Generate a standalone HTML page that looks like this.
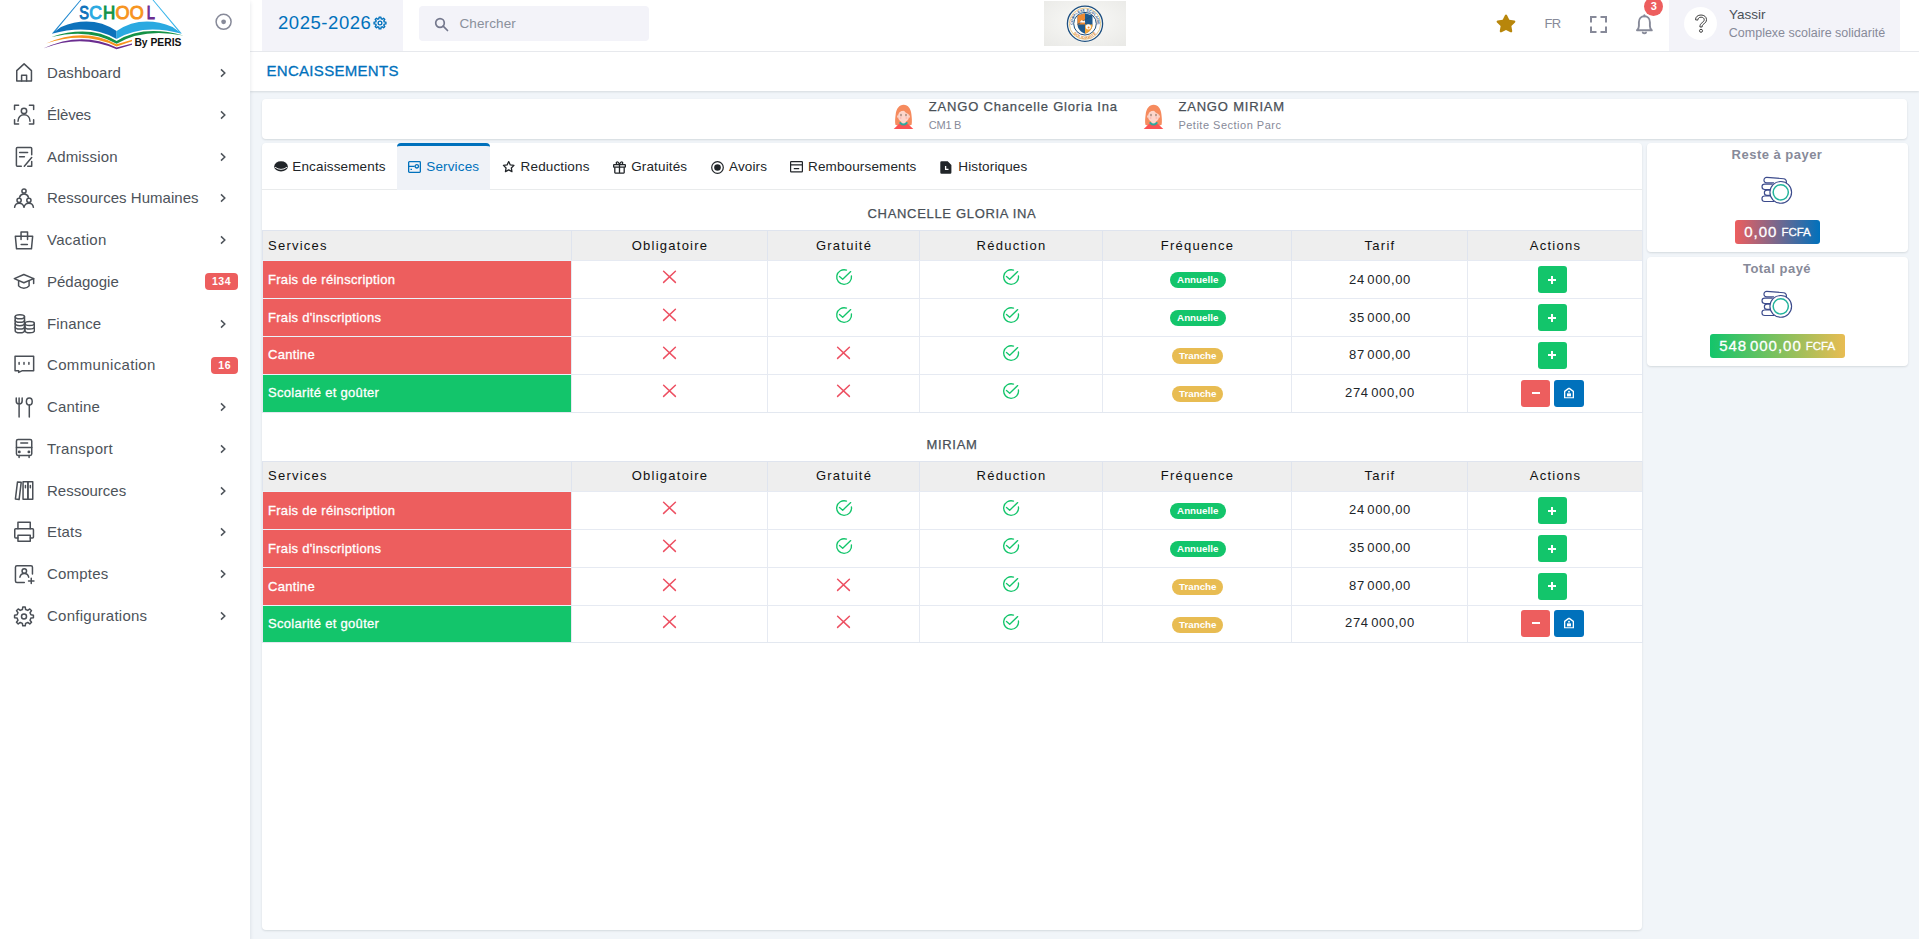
<!DOCTYPE html>
<html lang="fr">
<head>
<meta charset="utf-8">
<title>Encaissements</title>
<style>
*{box-sizing:border-box;margin:0;padding:0}
html,body{width:1919px;height:939px;overflow:hidden}
body{background:#f1f5f9;font-family:"Liberation Sans",sans-serif;color:#212529;position:relative;font-size:13px}
.abs{position:absolute}
svg{display:block}
/* sidebar */
#sidebar{position:absolute;left:0;top:0;width:250px;height:939px;background:#fff;z-index:5;box-shadow:0 2px 4px rgba(15,34,58,.12)}
.nav{position:absolute;left:0;top:52px;width:250px}
.nav .it{position:relative;height:41.77px;width:250px}
.nav .it .ic{position:absolute;left:13.100px;top:10px;width:22px;height:22px}
.nav .it .tx{position:absolute;left:47px;top:0;line-height:41.77px;font-size:15px;color:#4d535a;white-space:nowrap}
.nav .it .ch{position:absolute;left:219px;top:16px;width:8px;height:10px}
.nav .it .bd{position:absolute;right:12.400px;top:12.400px;height:17px;line-height:17px;padding:0 6.400px 0 7px;border-radius:4px;background:#ed5e5e;color:#fff;font-size:10.500px;font-weight:700;letter-spacing:.600px}
/* topbar */
#topbar{position:absolute;left:250px;top:0;width:1669px;height:52px;background:#fff;border-bottom:1px solid #e9ebef}
#year{position:absolute;left:12px;top:0;width:141px;height:51px;background:#f3f3f9}
#year .t{position:absolute;left:16px;top:0;line-height:46px;font-size:18.500px;color:#0071bc;letter-spacing:.55px;white-space:nowrap}
#search{position:absolute;left:169px;top:6px;width:230px;height:35px;background:#f3f3f9;border-radius:4px}
#search .t{position:absolute;left:40.400px;top:0;line-height:35px;font-size:13.500px;color:#8a909c;letter-spacing:.12px}
#user{position:absolute;left:1419px;top:0;width:230.600px;height:51px;background:#f3f3f9}
#user .av{position:absolute;left:15px;top:7px;width:33px;height:33px;border-radius:50%;background:#fff}
#user .n{position:absolute;left:60px;top:7.200px;font-size:13.5px;color:#495057;line-height:16px}
#user .s{position:absolute;left:59.800px;top:25.400px;font-size:12.5px;color:#878a99;line-height:16px;white-space:nowrap}
/* title */
#title{position:absolute;left:250px;top:52px;width:1669px;height:39px;background:#fff;box-shadow:0 1px 2px rgba(56,65,74,.15)}
#title .t{position:absolute;left:16.500px;top:0;line-height:37.500px;font-size:15px;font-weight:400;color:#0071bc;letter-spacing:.300px;-webkit-text-stroke:.300px #0071bc}
.card{position:absolute;background:#fff;border-radius:4px;box-shadow:0 1px 2px rgba(56,65,74,.15)}

.stu .nm{position:absolute;font-size:13px;line-height:16px;color:#495057;letter-spacing:.82px;white-space:nowrap;-webkit-text-stroke:.25px #495057}
.stu .cl{position:absolute;font-size:11px;line-height:14px;color:#878a99;white-space:nowrap}
.tab{position:absolute;top:3px;height:43px;line-height:42px;font-size:13.500px;color:#212529;white-space:nowrap;letter-spacing:.14px}
.tab svg{position:absolute}
#tabs{position:absolute;left:0;top:0;width:1380px;height:47px;border-bottom:1px solid #e9ebec}
#tabact{position:absolute;left:135.300px;top:0;width:92.700px;height:46.500px;background:#eff2f7;border-top:3px solid #0071bc;border-radius:4px 4px 0 0}
.sect{position:absolute;left:0;width:1380px;text-align:center;font-size:13px;line-height:16px;color:#495057;letter-spacing:.68px;-webkit-text-stroke:.25px #495057}

.tb{position:absolute;left:0;width:1380px;border-collapse:separate;border-spacing:0;table-layout:fixed;border-right:1px solid #e3e8f0;border-bottom:1px solid #e3e8f0}
.tb th{height:30.250px;background:#eee;border-left:1px solid #dfe4ee;border-top:1px solid #dfe4ee;font-weight:400;font-size:13px;letter-spacing:1.250px;color:#111;text-align:center;padding:0 0 0 1px;line-height:29px;vertical-align:top}
.tb th.l{text-align:left;padding-left:5px}
.tb td{height:37.850px;border-left:1px solid #e6eaf2;border-top:1px solid #e6eaf2;text-align:center;padding:0;vertical-align:top;line-height:36.500px;font-size:13px;color:#212529;position:relative}
.tb td.nm{text-align:left;padding-left:5px;color:#fff;letter-spacing:.300px;border-top-color:#eaf3f9;-webkit-text-stroke:.300px #fff}
.tb td.nm.r{background:#ed5e5e}.tb td.nm.g{background:#13c56b}
.tb td.nm span{position:relative;top:.500px}
.tb .ix{position:absolute;left:50%;margin-left:-7.500px;top:8.900px}
.tb .ic2{position:absolute;left:50%;margin-left:-8.700px;top:6.800px}
.bg{display:inline-block;height:16px;line-height:16px;border-radius:8px;padding:0 7.300px;color:#fff;font-size:9.800px;font-weight:700;vertical-align:top;margin-top:10.800px;margin-left:1.500px}
.bg.ga{background:#13c56b}.bg.ye{background:#e8bc52;padding:0 6.500px}
.tb td.tf{letter-spacing:.650px;word-spacing:-1.800px;line-height:34px;padding-top:1.500px;padding-left:1px}
.btn{display:inline-block;width:29px;height:27px;border-radius:3px;vertical-align:top;margin-top:5px;position:relative}
.btn svg{position:absolute;left:50%;top:50%;transform:translate(-50%,-50%)}
.btn.g{background:#13c56b;margin-left:-6px}.btn.r{background:#ed5e5e;margin-left:-5px}.btn.b{background:#0071bc;margin-left:4px;width:30px}

.rc .h{position:absolute;left:0;width:260px;top:4px;text-align:center;font-size:13px;font-weight:700;line-height:16px;color:#878a99;letter-spacing:.48px}
.rc .coin{position:absolute;left:112px;top:32px}
.rc .amt{position:absolute;top:77px;height:24px;border-radius:3px;color:#fff;white-space:nowrap;line-height:24px;font-size:15px;letter-spacing:1px;word-spacing:-2.500px;-webkit-text-stroke:.300px #fff}
.rc .amt small{font-size:11.500px;letter-spacing:0;margin-left:4px;position:relative;top:-.600px}
.t2 th{line-height:27.600px}
.t2 td.tf{padding-top:.700px}
.t2 tbody tr:last-child td{height:37.400px;line-height:36.200px}
.t2 tbody tr:last-child td.tf{line-height:34px}
.t2 tbody tr:last-child .btn{margin-top:4px}
.t2 tbody tr:nth-child(n+3) .ix{top:9.600px}.t2 tbody tr:nth-child(n+3) .ic2{top:7.500px}
.t2 td.nm span{top:.700px}
.t2 .ix{top:8.600px}.t2 .ic2{top:6.500px}
</style>
</head>
<body>
<div id="sidebar">
<svg id="logo" class="abs" style="left:0;top:0" width="250" height="52" viewBox="0 0 250 52">
<path d="M80.2 0L52 33.600 54.400 32.400 81.300 0z" fill="#1b86cf"/>
<path d="M153.600 0L181.800 33.600 179.400 32.400 152.500 0z" fill="#35b4ea"/>
<path d="M51.800 33.800L61 26.900Q92 14.500 116.600 31L116.600 39Q90 23 51.800 33.800z" fill="#0d72bb"/>
<path d="M181.800 33.800L172.600 26.900Q141.200 14.500 116.600 31L116.600 39Q143.200 23 181.800 33.800z" fill="#2aa9e1"/>
<path d="M51.200 37Q90 24.300 116.600 41Q143.500 24.300 183.300 35.500Q143.500 27.800 116.600 43.800Q90 27.800 51.200 37z" fill="#149247"/>
<path d="M46 43.500Q84 26.800 116.600 44.200L132 39.800L132 41.300L116.600 46.400Q84 30.800 46 43.500z" fill="#f7941e"/>
<path d="M43.200 48.600Q81 30.400 116.600 47.400L132 43.500L132 44.700L116.600 49.200Q81 33.600 43.200 48.600z" fill="#6b2d90"/>
<g font-family="Liberation Sans, sans-serif" font-size="19.200" text-anchor="middle" stroke-width="1">
<text transform="translate(84.200 18.700) scale(.760 1)" fill="#0d72bb" stroke="#0d72bb">S</text>
<text transform="translate(95.650 18.700) scale(.920 1)" fill="#2aa9e1" stroke="#2aa9e1">C</text>
<text transform="translate(109.150 18.700) scale(.880 1)" fill="#149247" stroke="#149247">H</text>
<text transform="translate(122.600 18.700) scale(.940 1)" fill="#f7941e" stroke="#f7941e">O</text>
<text transform="translate(136.700 18.700) scale(.940 1)" fill="#f7941e" stroke="#f7941e">O</text>
<text transform="translate(150.700 18.700) scale(.760 1)" fill="#6b2d90" stroke="#6b2d90">L</text>
</g>
<text x="134.400" y="46.400" font-family="Liberation Sans, sans-serif" font-weight="700" font-size="11" fill="#111" textLength="47" lengthAdjust="spacingAndGlyphs">By PERIS</text>
<circle cx="223.600" cy="21.800" r="7.500" fill="none" stroke="#878a99" stroke-width="1.500"/><circle cx="223.600" cy="21.800" r="2.400" fill="#878a99"/>
</svg>
  <div class="nav" id="nav"><!--NAV-->
<div class="it"><svg class="ic" viewBox="0 0 22 22" fill="none" stroke="#4a4f56" stroke-width="1.5" stroke-linecap="round" stroke-linejoin="round"><path d="M3.750 19V8.600L11.100 1.900l7.350 6.700V19z"/><path d="M8.600 19v-5.800h5V19"/></svg><span class="tx" style="letter-spacing:0.07px">Dashboard</span><svg class="ch" viewBox="0 0 8 10"><path d="M2 1.400L5.800 5 2 8.600" fill="none" stroke="#4d535a" stroke-width="1.5"/></svg></div>
<div class="it"><svg class="ic" viewBox="0 0 22 22" fill="none" stroke="#4a4f56" stroke-width="1.5" stroke-linecap="round" stroke-linejoin="round"><path d="M1.55 5.4V1.15H5.6M16.4 1.15h4.25V5.4M1.55 15.8v4.25H5.6M16.4 20.05h4.25V15.8"/><circle cx="11" cy="6.900" r="2.700"/><path d="M5 17.300c0-4.200 2.600-6.600 6-6.600s6 2.400 6 6.600"/></svg><span class="tx" style="letter-spacing:-0.18px">Élèves</span><svg class="ch" viewBox="0 0 8 10"><path d="M2 1.400L5.800 5 2 8.600" fill="none" stroke="#4d535a" stroke-width="1.5"/></svg></div>
<div class="it"><svg class="ic" viewBox="0 0 22 22" fill="none" stroke="#4a4f56" stroke-width="1.5" stroke-linecap="round" stroke-linejoin="round"><path d="M8.3 20.3H4.4a1 1 0 0 1-1-1V2.4a1 1 0 0 1 1-1h13.3a1 1 0 0 1 1 1v6.3"/><path d="M6.6 6.6h8M6.6 10.8h4.8"/><path d="M18.7 11.6l-7.4 8.7M18.7 15.6v4.7h-4"/></svg><span class="tx" style="letter-spacing:0.17px">Admission</span><svg class="ch" viewBox="0 0 8 10"><path d="M2 1.400L5.800 5 2 8.600" fill="none" stroke="#4d535a" stroke-width="1.5"/></svg></div>
<div class="it"><svg class="ic" viewBox="0 0 22 22" fill="none" stroke="#4a4f56" stroke-width="1.5" stroke-linecap="round" stroke-linejoin="round"><circle cx="11" cy="4" r="2.1"/><circle cx="6.1" cy="13.3" r="2.1"/><circle cx="15.9" cy="13.3" r="2.1"/><path d="M6.6 10.2C7.2 8.1 8.9 7 11 7s3.8 1.1 4.4 3.2"/><path d="M1.6 20.3c.3-2.6 2-4.1 4.5-4.1s4.4 1.600 4.900 4.1c.5-2.5 2.400-4.1 4.900-4.1s4.200 1.500 4.500 4.100"/></svg><span class="tx" style="letter-spacing:0.04px">Ressources Humaines</span><svg class="ch" viewBox="0 0 8 10"><path d="M2 1.400L5.800 5 2 8.600" fill="none" stroke="#4d535a" stroke-width="1.5"/></svg></div>
<div class="it"><svg class="ic" viewBox="0 0 22 22" fill="none" stroke="#4a4f56" stroke-width="1.5" stroke-linecap="round" stroke-linejoin="round"><path d="M2.35 7.2h17.3l-1.2 12.65H3.55z"/><path d="M8.05 10.600V3.050h6.5v7.550"/><path d="M8.2 15.5h6.2"/></svg><span class="tx" style="letter-spacing:0.28px">Vacation</span><svg class="ch" viewBox="0 0 8 10"><path d="M2 1.400L5.800 5 2 8.600" fill="none" stroke="#4d535a" stroke-width="1.5"/></svg></div>
<div class="it"><svg class="ic" viewBox="0 0 22 22" fill="none" stroke="#4a4f56" stroke-width="1.5" stroke-linecap="round" stroke-linejoin="round"><path d="M1.3 7.6L10.850 3.500 20.650 7.600 10.850 11.700z"/><path d="M5.6 9.800v5.100c1.300 1.600 3.100 2.400 5.250 2.400s3.950-.800 5.250-2.400V9.800"/><path d="M20.650 7.600v5.000"/></svg><span class="tx">Pédagogie</span><span class="bd">134</span></div>
<div class="it"><svg class="ic" viewBox="0 0 22 22" fill="none" stroke="#4a4f56" stroke-width="1.5" stroke-linecap="round" stroke-linejoin="round"><ellipse cx="6.850" cy="3.800" rx="4.650" ry="2.050"/><path d="M2.200 3.800V17.700c0 1.130 2.080 2.050 4.650 2.050s4.650-.920 4.650-2.050V3.800"/><path d="M2.200 7.200c0 1.130 2.080 2.050 4.650 2.050s4.650-.920 4.650-2.050M2.200 10.600c0 1.130 2.080 2.050 4.650 2.050s4.650-.920 4.650-2.050M2.200 13.900c0 1.130 2.080 2.050 4.650 2.050s4.650-.920 4.650-2.050"/><ellipse cx="16.700" cy="10.500" rx="4.700" ry="2.050"/><path d="M12 10.500V17.700c0 1.130 2.100 2.050 4.700 2.050s4.700-.920 4.700-2.050V10.500"/><path d="M12 13.900c0 1.130 2.100 2.050 4.700 2.050s4.700-.920 4.700-2.050"/></svg><span class="tx" style="letter-spacing:0.13px">Finance</span><svg class="ch" viewBox="0 0 8 10"><path d="M2 1.400L5.800 5 2 8.600" fill="none" stroke="#4d535a" stroke-width="1.5"/></svg></div>
<div class="it"><svg class="ic" viewBox="0 0 22 22" fill="none" stroke="#4a4f56" stroke-width="1.5" stroke-linecap="round" stroke-linejoin="round"><path d="M2.050 2.350h18.600v14.300H9.400l-3.700 1.800v-1.800H2.050z"/><path d="M6.1 8.600v1.600M11 8.600v1.600M15.900 8.600v1.600"/></svg><span class="tx" style="letter-spacing:0.35px">Communication</span><span class="bd">16</span></div>
<div class="it"><svg class="ic" viewBox="0 0 22 22" fill="none" stroke="#4a4f56" stroke-width="1.5" stroke-linecap="round" stroke-linejoin="round"><path d="M3.250 1.950v3.100c0 1.900 1.200 3.000 2.850 3.000s3.050-1.100 3.050-3.000V1.950M6.100 1.950v19.000"/><ellipse cx="16.300" cy="5.450" rx="2.900" ry="3.550"/><path d="M16.300 9.000v11.950"/></svg><span class="tx" style="letter-spacing:0.19px">Cantine</span><svg class="ch" viewBox="0 0 8 10"><path d="M2 1.400L5.800 5 2 8.600" fill="none" stroke="#4d535a" stroke-width="1.5"/></svg></div>
<div class="it"><svg class="ic" viewBox="0 0 22 22" fill="none" stroke="#4a4f56" stroke-width="1.5" stroke-linecap="round" stroke-linejoin="round"><rect x="3.450" y="1.450" width="15.300" height="16.000" rx="1.600"/><path d="M3.450 9.600h15.300M7.800 5.100h6.800M6.100 17.450v2.000M16.100 17.450v2.000"/><circle cx="6.300" cy="13.900" r=".7"/><circle cx="15.900" cy="13.900" r=".7"/></svg><span class="tx" style="letter-spacing:0.25px">Transport</span><svg class="ch" viewBox="0 0 8 10"><path d="M2 1.400L5.800 5 2 8.600" fill="none" stroke="#4d535a" stroke-width="1.5"/></svg></div>
<div class="it"><svg class="ic" viewBox="0 0 22 22" fill="none" stroke="#4a4f56" stroke-width="1.5" stroke-linecap="round" stroke-linejoin="round"><path d="M4.500 1.900l3.700.400-2.100 17.300-3.700-.500z"/><rect x="10.050" y="1.850" width="4.850" height="17.500"/><rect x="14.900" y="1.850" width="4.850" height="17.500"/><path d="M12.450 5.600v2.200M17.350 5.600v2.200"/></svg><span class="tx">Ressources</span><svg class="ch" viewBox="0 0 8 10"><path d="M2 1.400L5.800 5 2 8.600" fill="none" stroke="#4d535a" stroke-width="1.5"/></svg></div>
<div class="it"><svg class="ic" viewBox="0 0 22 22" fill="none" stroke="#4a4f56" stroke-width="1.5" stroke-linecap="round" stroke-linejoin="round"><path d="M4.950 7.800V1.250h12.300V7.800"/><path d="M4.950 17.000H2.750a1 1 0 0 1-1-1V8.800a1 1 0 0 1 1-1h16.700a1 1 0 0 1 1 1v7.200a1 1 0 0 1-1 1h-2.200"/><rect x="4.950" y="14.200" width="12.300" height="6.150"/></svg><span class="tx" style="letter-spacing:0.18px">Etats</span><svg class="ch" viewBox="0 0 8 10"><path d="M2 1.400L5.800 5 2 8.600" fill="none" stroke="#4d535a" stroke-width="1.5"/></svg></div>
<div class="it"><svg class="ic" viewBox="0 0 22 22" fill="none" stroke="#4a4f56" stroke-width="1.5" stroke-linecap="round" stroke-linejoin="round"><path d="M11.300 19.550H3.950a1.500 1.500 0 0 1-1.500-1.500V4.150a1.500 1.500 0 0 1 1.500-1.500h14.000a1.500 1.500 0 0 1 1.500 1.500v6.900"/><circle cx="11.300" cy="8.000" r="2.250"/><path d="M6.900 14.200c.500-2.400 2.100-3.700 4.400-3.700s3.900 1.300 4.400 3.700"/><path d="M18.250 15.200v5.400M15.550 17.900h5.400"/></svg><span class="tx" style="letter-spacing:0.19px">Comptes</span><svg class="ch" viewBox="0 0 8 10"><path d="M2 1.400L5.800 5 2 8.600" fill="none" stroke="#4d535a" stroke-width="1.5"/></svg></div>
<div class="it"><svg class="ic" viewBox="0 0 22 22" fill="none" stroke="#4a4f56" stroke-width="1.5" stroke-linecap="round" stroke-linejoin="round"><path d="M9.38 4.54L9.77 2.03L12.23 2.03L12.62 4.54L14.74 5.42L16.79 3.92L18.53 5.66L17.03 7.71L17.91 9.83L20.42 10.22L20.42 12.68L17.91 13.07L17.03 15.19L18.53 17.24L16.79 18.98L14.74 17.48L12.62 18.36L12.23 20.87L9.77 20.87L9.38 18.36L7.26 17.48L5.21 18.98L3.47 17.24L4.97 15.19L4.09 13.07L1.58 12.68L1.58 10.22L4.09 9.83L4.97 7.71L3.47 5.66L5.21 3.92L7.26 5.42z"/><circle cx="11" cy="11.450" r="2.500"/></svg><span class="tx" style="letter-spacing:0.26px">Configurations</span><svg class="ch" viewBox="0 0 8 10"><path d="M2 1.400L5.800 5 2 8.600" fill="none" stroke="#4d535a" stroke-width="1.5"/></svg></div>
<!--/NAV--></div>
</div>
<div id="topbar">
  <div id="year"><div class="t">2025-2026</div>
<svg class="abs" style="left:110.700px;top:16.200px" width="14" height="14" viewBox="0 0 15 15"><path d="M6.29 2.96L6.54 1.17L8.46 1.17L8.71 2.96L9.86 3.43L11.30 2.35L12.65 3.70L11.57 5.14L12.04 6.29L13.83 6.54L13.83 8.46L12.04 8.71L11.57 9.86L12.65 11.30L11.30 12.65L9.86 11.57L8.71 12.04L8.46 13.83L6.54 13.83L6.29 12.04L5.14 11.57L3.70 12.65L2.35 11.30L3.43 9.86L2.96 8.71L1.17 8.46L1.17 6.54L2.96 6.29L3.43 5.14L2.35 3.70L3.70 2.35L5.14 3.43z" fill="none" stroke="#0071bc" stroke-width="1.500" stroke-linejoin="round"/><circle cx="7.500" cy="7.500" r="2" fill="none" stroke="#0071bc" stroke-width="1.400"/></svg></div>
  <div id="search"><svg class="abs" style="left:15px;top:11px" width="15" height="15" viewBox="0 0 15 15" fill="none" stroke="#74788d" stroke-width="1.700"><circle cx="6" cy="6" r="4.300"/><path d="M9.200 9.200l4.300 4.300" stroke-linecap="round"/></svg><div class="t">Chercher</div></div>
  <svg class="abs" id="crest" style="left:794px;top:1px" width="82" height="45" viewBox="0 0 82 45">
  <defs><radialGradient id="cg" cx=".5" cy=".45" r=".75"><stop offset="0" stop-color="#fafaf8"/><stop offset="1" stop-color="#e9e9e6"/></radialGradient>
  <path id="arcT" d="M28.700 22.700a12.300 12.300 0 0 1 24.600 0"/><path id="arcB" d="M25.800 22.700a15.200 15.200 0 0 0 30.400 0"/></defs>
  <rect width="82" height="45" fill="url(#cg)"/>
  <circle cx="41" cy="22.700" r="17.600" fill="#fdfdfb" stroke="#1d4f80" stroke-width="1.300"/>
  <circle cx="41" cy="22.700" r="15.700" fill="none" stroke="#d9a441" stroke-width=".6"/>
  <circle cx="41" cy="22.700" r="11.300" fill="#fdfdfb" stroke="#1d4f80" stroke-width="1"/>
  <text font-family="Liberation Sans, sans-serif" font-size="3.500" font-weight="700" fill="#1d4f80" letter-spacing=".1"><textPath href="#arcT" startOffset="50%" text-anchor="middle">COMPLEXE SCOLAIRE</textPath></text>
  <text font-family="Liberation Sans, sans-serif" font-size="4" font-weight="700" fill="#e08a2c" letter-spacing=".2"><textPath href="#arcB" startOffset="50%" text-anchor="middle">SOLIDARITÉ</textPath></text>
  <path d="M33.500 14.500L41 12.200l7.500 2.300v8.500c0 5-3.200 8-7.500 9.800-4.300-1.800-7.500-4.800-7.500-9.800z" fill="#1f5a8e"/>
  <path d="M33.500 14.500L41 12.200v11.200h-7.500z" fill="#ee8a32"/>
  <path d="M41 23.400h7.500c0 4.600-3 7.600-7.500 9.400z" fill="#f2a63a"/>
  <path d="M33.500 23.400L48.500 14.500" stroke="#1d4f80" stroke-width=".8"/>
  <circle cx="44.300" cy="25.800" r="2.600" fill="#fff"/><circle cx="44.600" cy="26.400" r="1" fill="#ee8a32"/>
  <path d="M35.500 21.500l2.200-2.600 1.500 1.400 1.200-1 .9 2.200z" fill="#fff"/>
  </svg>
  <svg class="abs" style="left:1245px;top:12.300px" width="22" height="22" viewBox="0 0 24 24"><path d="M12 2.700c.5 0 .95.280 1.170.730l2.450 4.960 5.480.800c1.070.155 1.500 1.470.720 2.220l-3.960 3.860.930 5.450c.180 1.060-.930 1.870-1.890 1.370L12 19.520l-4.900 2.580c-.960.500-2.070-.310-1.890-1.370l.930-5.450-3.960-3.860c-.780-.750-.350-2.065.720-2.220l5.480-.800 2.450-4.960c.220-.450.670-.730 1.170-.730z" fill="#b8860b"/></svg>
  <div class="abs" style="left:1294.500px;top:16px;font-size:13px;line-height:16px;color:#878a99;letter-spacing:-.8px">FR</div>
  <svg class="abs" style="left:1339px;top:15px" width="19" height="19" viewBox="0 0 19 19" fill="none" stroke="#878a99" stroke-width="2"><path d="M2 7.500V2h5.500M11.500 2H17v5.500M17 11.500V17h-5.500M7.500 17H2v-5.500"/></svg>
  <svg class="abs" style="left:1384px;top:13px" width="21" height="22" viewBox="0 0 21 22" fill="none" stroke="#878a99" stroke-width="1.900" stroke-linejoin="round" stroke-linecap="round"><path d="M3 17.300c1.300-1.100 1.900-2.400 1.900-4.200V9.300c0-3.600 2.300-6 5.500-6s5.500 2.400 5.500 6v3.800c0 1.800.600 3.100 1.900 4.200z"/><path d="M8.800 19.600c.400.500 1 .700 1.600.700s1.200-.200 1.600-.700"/><path d="M10.400 3.300V2.300"/></svg>
  <div class="abs" style="left:1394.250px;top:-3px;width:19px;height:19px;border-radius:50%;background:#ed5e5e;color:#fff;font-size:11px;font-weight:700;line-height:19px;text-align:center">3</div>
  <div id="user"><div class="av"><svg class="abs" style="left:9.500px;top:6.500px" width="14" height="20" viewBox="0 0 14 20" fill="none" stroke="#2b2b2b" stroke-width=".9" stroke-linejoin="round"><path d="M1.500 5.800C1.500 2.800 3.800 1 7 1s5.500 1.900 5.500 4.600c0 2.200-1.300 3.300-2.700 4.300-1.200.900-1.700 1.500-1.700 3.100H5.900c0-2.300.800-3.300 2.300-4.400 1.200-.900 2-1.600 2-2.900 0-1.500-1.200-2.500-3.100-2.500-2 0-3.200 1.100-3.300 2.900z"/><circle cx="7" cy="16.800" r="1.500"/></svg></div><div class="n">Yassir</div><div class="s">Complexe scolaire solidarité</div></div>
</div>
<div id="title"><div class="t">ENCAISSEMENTS</div></div>
<div class="card" id="students" style="left:262px;top:99px;width:1645px;height:40px"><div class="stu"><svg class="abs" style="left:630px;top:4px" width="24" height="28" viewBox="0 0 24 28"><path d="M3.400 21.800c-.600-3.500-.200-7 .300-10.500C4.300 5.800 7.200 1.800 11.600 1.800c4.500 0 7.300 4 7.800 9.500.400 3.500.800 7 .200 10.500-1.500.800-3.600 1.200-5 .800H8.400c-1.500.400-3.500 0-5-.800z" fill="#f68b5e"/><path d="M1.700 25.900L7 21h9l5.300 4.900z" fill="#fb5252"/><path d="M9.200 17.500h4.600v4.200H9.200z" fill="#fbd3c8"/><ellipse cx="11.500" cy="13.300" rx="5.500" ry="6" fill="#fdd5cb"/><ellipse cx="5.900" cy="13.600" rx=".8" ry="1.300" fill="#fbd0c4"/><ellipse cx="17.100" cy="13.600" rx=".8" ry="1.300" fill="#fbd0c4"/><path d="M6 10.800c1.500-2.500 4-3.300 6.300-2.800 1.300 1.800 3 2.800 4.800 3.200.300-4-1.600-6.900-5.500-6.900S5.500 7 6 10.800z" fill="#f68b5e"/><path d="M8.300 20Q11.500 23.200 14.700 20" fill="none" stroke="#2fa89c" stroke-width="2" stroke-linecap="round"/><ellipse cx="9" cy="12.100" rx=".7" ry="1.300" fill="#8f7a6e"/><ellipse cx="14" cy="12.100" rx=".7" ry="1.300" fill="#8f7a6e"/><circle cx="8.600" cy="15" r="1" fill="#fbbcb8"/><circle cx="14.400" cy="15" r="1" fill="#fbbcb8"/></svg><div class="nm" style="left:666.800px;top:-.500px">ZANGO Chancelle Gloria Ina</div><div class="cl" style="left:666.800px;top:19px;letter-spacing:-.25px">CM1 B</div><svg class="abs" style="left:879.7px;top:4px" width="24" height="28" viewBox="0 0 24 28"><path d="M3.400 21.800c-.600-3.500-.200-7 .300-10.500C4.300 5.800 7.200 1.800 11.600 1.800c4.500 0 7.300 4 7.800 9.500.400 3.500.800 7 .200 10.500-1.500.800-3.600 1.200-5 .800H8.400c-1.500.400-3.500 0-5-.800z" fill="#f68b5e"/><path d="M1.700 25.900L7 21h9l5.300 4.900z" fill="#fb5252"/><path d="M9.200 17.500h4.600v4.200H9.200z" fill="#fbd3c8"/><ellipse cx="11.500" cy="13.300" rx="5.500" ry="6" fill="#fdd5cb"/><ellipse cx="5.900" cy="13.600" rx=".8" ry="1.300" fill="#fbd0c4"/><ellipse cx="17.100" cy="13.600" rx=".8" ry="1.300" fill="#fbd0c4"/><path d="M6 10.800c1.500-2.500 4-3.300 6.300-2.800 1.300 1.800 3 2.800 4.800 3.200.300-4-1.600-6.900-5.500-6.900S5.500 7 6 10.800z" fill="#f68b5e"/><path d="M8.300 20Q11.500 23.200 14.700 20" fill="none" stroke="#2fa89c" stroke-width="2" stroke-linecap="round"/><ellipse cx="9" cy="12.100" rx=".7" ry="1.300" fill="#8f7a6e"/><ellipse cx="14" cy="12.100" rx=".7" ry="1.300" fill="#8f7a6e"/><circle cx="8.600" cy="15" r="1" fill="#fbbcb8"/><circle cx="14.400" cy="15" r="1" fill="#fbbcb8"/></svg><div class="nm" style="left:916.400px;top:-.500px">ZANGO MIRIAM</div><div class="cl" style="left:916.400px;top:19px;letter-spacing:.5px">Petite Section Parc</div></div></div>
<div class="card" id="main" style="left:262px;top:143px;width:1380px;height:787px"><div id="tabs"><div id="tabact"></div><div class="tab" style="left:0;color:#212529"><span class="abs" style="left:30.3px;top:0">Encaissements</span><svg style="left:11.500px;top:15.200px" width="14" height="11" viewBox="0 0 14 11"><ellipse cx="7" cy="5.400" rx="6.800" ry="5.100" fill="#212529"/><path d="M1 6.200Q7 10.600 13 6.200" fill="none" stroke="#fff" stroke-width=".9"/></svg></div><div class="tab" style="left:0;color:#0071bc"><span class="abs" style="left:164.300px;top:0">Services</span><svg style="left:146.4px;top:14.500px" width="13" height="12" viewBox="0 0 13 12" fill="none" stroke="#0071bc" stroke-width="1.300"><rect x=".650" y=".650" width="11.700" height="10.700" rx=".8"/><path d="M.650 5.300h6M2.500 8.300h1.500" /><circle cx="8.800" cy="5.300" r="1.700"/></svg></div><div class="tab" style="left:0;color:#212529"><span class="abs" style="left:258.6px;top:0">Reductions</span><svg style="left:239.6px;top:13.500px" width="13.400" height="13.400" viewBox="0 0 24 24" fill="none" stroke="#212529" stroke-width="2.300" stroke-linejoin="round"><path d="M12 2.800l2.900 6 6.500.900-4.700 4.600 1.100 6.500L12 17.700l-5.800 3.100 1.100-6.500L2.600 9.700l6.500-.900z"/></svg></div><div class="tab" style="left:0;color:#212529"><span class="abs" style="left:369.2px;top:0">Gratuités</span><svg style="left:351.0px;top:14.500px" width="13" height="13" viewBox="0 0 13 13" fill="none" stroke="#212529" stroke-width="1.300"><rect x=".650" y="3.600" width="11.700" height="2.600" rx=".4"/><path d="M1.800 6.200v5.400a.5.500 0 0 0 .5.500h8.400a.5.500 0 0 0 .5-.5V6.200M6.500 3.600v8.500"/><path d="M6.500 3.400C5.800 1.600 4.800.700 3.900 1s-.900 1.700.300 2.400M6.500 3.400C7.200 1.600 8.200.700 9.100 1s.900 1.700-.300 2.400"/></svg></div><div class="tab" style="left:0;color:#212529"><span class="abs" style="left:467.0px;top:0">Avoirs</span><svg style="left:448.6px;top:14.500px" width="13" height="13" viewBox="0 0 13 13"><circle cx="6.500" cy="6.500" r="5.800" fill="none" stroke="#212529" stroke-width="1.200"/><circle cx="6.500" cy="6.500" r="3.300" fill="#212529"/></svg></div><div class="tab" style="left:0;color:#212529"><span class="abs" style="left:546.0px;top:0">Remboursements</span><svg style="left:527.7px;top:15px" width="13" height="12" viewBox="0 0 13 12" fill="none" stroke="#212529" stroke-width="1.200"><rect x=".600" y=".600" width="11.800" height="10.300" rx=".6"/><path d="M.600 3.800h11.800M3.800 7.700h5.400"/></svg></div><div class="tab" style="left:0;color:#212529"><span class="abs" style="left:696.3px;top:0">Historiques</span><svg style="left:678.4px;top:14.800px" width="12" height="13" viewBox="0 0 12 13"><path d="M1.500.300h6.200l3.700 3.600v7.600a1.200 1.200 0 0 1-1.200 1.200H1.500A1.200 1.200 0 0 1 .300 11.500V1.500A1.200 1.200 0 0 1 1.500.300z" fill="#212529"/><path d="M5.600 5v3.400h2.900" fill="none" stroke="#fff" stroke-width="1.300"/></svg></div></div><div class="sect" style="top:62.500px">CHANCELLE GLORIA INA</div><!--T1-->
<table class="tb" style="top:87px"><colgroup><col style="width:309px"><col style="width:196px"><col style="width:152px"><col style="width:183px"><col style="width:189px"><col style="width:176px"><col style="width:175px"></colgroup><thead><tr><th class="l">Services</th><th>Obligatoire</th><th>Gratuité</th><th>Réduction</th><th>Fréquence</th><th>Tarif</th><th>Actions</th></tr></thead><tbody><tr><td class="nm r"><span>Frais de réinscription</span></td><td><svg class="ix" width="15" height="14" viewBox="0 0 15 14"><path d="M1.600 1.200l11.800 11.200M13.400 1.200L1.600 12.400" fill="none" stroke="#ed5062" stroke-width="1.500" stroke-linecap="round"/></svg></td><td><svg class="ic2" width="18" height="18" viewBox="0 0 18 18" fill="none" stroke="#13c56b" stroke-width="1.350" stroke-linecap="round" stroke-linejoin="round"><path d="M16.430 7.980A7.400 7.300 0 1 1 11.500 2.140"/><path d="M4.500 8.500l3.200 2.700 8-7.600"/></svg></td><td><svg class="ic2" width="18" height="18" viewBox="0 0 18 18" fill="none" stroke="#13c56b" stroke-width="1.350" stroke-linecap="round" stroke-linejoin="round"><path d="M16.430 7.980A7.400 7.300 0 1 1 11.500 2.140"/><path d="M4.500 8.500l3.200 2.700 8-7.600"/></svg></td><td><span class="bg ga">Annuelle</span></td><td class="tf">24 000,00</td><td class="ac"><span class="btn g"><svg width="8" height="8" viewBox="0 0 8 8"><path d="M4 0v8M0 4h8" stroke="#fff" stroke-width="2"/></svg></span></td></tr><tr><td class="nm r"><span>Frais d'inscriptions</span></td><td><svg class="ix" width="15" height="14" viewBox="0 0 15 14"><path d="M1.600 1.200l11.800 11.200M13.400 1.200L1.600 12.400" fill="none" stroke="#ed5062" stroke-width="1.500" stroke-linecap="round"/></svg></td><td><svg class="ic2" width="18" height="18" viewBox="0 0 18 18" fill="none" stroke="#13c56b" stroke-width="1.350" stroke-linecap="round" stroke-linejoin="round"><path d="M16.430 7.980A7.400 7.300 0 1 1 11.500 2.140"/><path d="M4.500 8.500l3.200 2.700 8-7.600"/></svg></td><td><svg class="ic2" width="18" height="18" viewBox="0 0 18 18" fill="none" stroke="#13c56b" stroke-width="1.350" stroke-linecap="round" stroke-linejoin="round"><path d="M16.430 7.980A7.400 7.300 0 1 1 11.500 2.140"/><path d="M4.500 8.500l3.200 2.700 8-7.600"/></svg></td><td><span class="bg ga">Annuelle</span></td><td class="tf">35 000,00</td><td class="ac"><span class="btn g"><svg width="8" height="8" viewBox="0 0 8 8"><path d="M4 0v8M0 4h8" stroke="#fff" stroke-width="2"/></svg></span></td></tr><tr><td class="nm r"><span>Cantine</span></td><td><svg class="ix" width="15" height="14" viewBox="0 0 15 14"><path d="M1.600 1.200l11.800 11.200M13.400 1.200L1.600 12.400" fill="none" stroke="#ed5062" stroke-width="1.500" stroke-linecap="round"/></svg></td><td><svg class="ix" width="15" height="14" viewBox="0 0 15 14"><path d="M1.600 1.200l11.800 11.200M13.400 1.200L1.600 12.400" fill="none" stroke="#ed5062" stroke-width="1.500" stroke-linecap="round"/></svg></td><td><svg class="ic2" width="18" height="18" viewBox="0 0 18 18" fill="none" stroke="#13c56b" stroke-width="1.350" stroke-linecap="round" stroke-linejoin="round"><path d="M16.430 7.980A7.400 7.300 0 1 1 11.500 2.140"/><path d="M4.500 8.500l3.200 2.700 8-7.600"/></svg></td><td><span class="bg ye">Tranche</span></td><td class="tf">87 000,00</td><td class="ac"><span class="btn g"><svg width="8" height="8" viewBox="0 0 8 8"><path d="M4 0v8M0 4h8" stroke="#fff" stroke-width="2"/></svg></span></td></tr><tr><td class="nm g"><span>Scolarité et goûter</span></td><td><svg class="ix" width="15" height="14" viewBox="0 0 15 14"><path d="M1.600 1.200l11.800 11.200M13.400 1.200L1.600 12.400" fill="none" stroke="#ed5062" stroke-width="1.500" stroke-linecap="round"/></svg></td><td><svg class="ix" width="15" height="14" viewBox="0 0 15 14"><path d="M1.600 1.200l11.800 11.200M13.400 1.200L1.600 12.400" fill="none" stroke="#ed5062" stroke-width="1.500" stroke-linecap="round"/></svg></td><td><svg class="ic2" width="18" height="18" viewBox="0 0 18 18" fill="none" stroke="#13c56b" stroke-width="1.350" stroke-linecap="round" stroke-linejoin="round"><path d="M16.430 7.980A7.400 7.300 0 1 1 11.500 2.140"/><path d="M4.500 8.500l3.200 2.700 8-7.600"/></svg></td><td><span class="bg ye">Tranche</span></td><td class="tf">274 000,00</td><td class="ac"><span class="btn r"><svg width="8" height="8" viewBox="0 0 8 8"><path d="M0 4h8" stroke="#fff" stroke-width="2"/></svg></span><span class="btn b"><svg style="margin:-.5px 0 0 .4px" width="10" height="11" viewBox="0 0 11 12" fill="none" stroke="#fff" stroke-width="1.500"><path d="M.700 4.200L5.500.700l4.800 3.500v7.100H.700z"/><rect x="3.300" y="6.400" width="4.400" height="3.300" fill="#fff" stroke="none"/><circle cx="5.500" cy="4.600" r="1" fill="#fff" stroke="none"/></svg></span></td></tr></tbody></table>
<!--/T1--><div class="sect" style="top:294px">MIRIAM</div><!--T2-->
<table class="tb t2" style="top:318px"><colgroup><col style="width:309px"><col style="width:196px"><col style="width:152px"><col style="width:183px"><col style="width:189px"><col style="width:176px"><col style="width:175px"></colgroup><thead><tr><th class="l">Services</th><th>Obligatoire</th><th>Gratuité</th><th>Réduction</th><th>Fréquence</th><th>Tarif</th><th>Actions</th></tr></thead><tbody><tr><td class="nm r"><span>Frais de réinscription</span></td><td><svg class="ix" width="15" height="14" viewBox="0 0 15 14"><path d="M1.600 1.200l11.800 11.200M13.400 1.200L1.600 12.400" fill="none" stroke="#ed5062" stroke-width="1.500" stroke-linecap="round"/></svg></td><td><svg class="ic2" width="18" height="18" viewBox="0 0 18 18" fill="none" stroke="#13c56b" stroke-width="1.350" stroke-linecap="round" stroke-linejoin="round"><path d="M16.430 7.980A7.400 7.300 0 1 1 11.500 2.140"/><path d="M4.500 8.500l3.200 2.700 8-7.600"/></svg></td><td><svg class="ic2" width="18" height="18" viewBox="0 0 18 18" fill="none" stroke="#13c56b" stroke-width="1.350" stroke-linecap="round" stroke-linejoin="round"><path d="M16.430 7.980A7.400 7.300 0 1 1 11.500 2.140"/><path d="M4.500 8.500l3.200 2.700 8-7.600"/></svg></td><td><span class="bg ga">Annuelle</span></td><td class="tf">24 000,00</td><td class="ac"><span class="btn g"><svg width="8" height="8" viewBox="0 0 8 8"><path d="M4 0v8M0 4h8" stroke="#fff" stroke-width="2"/></svg></span></td></tr><tr><td class="nm r"><span>Frais d'inscriptions</span></td><td><svg class="ix" width="15" height="14" viewBox="0 0 15 14"><path d="M1.600 1.200l11.800 11.200M13.400 1.200L1.600 12.400" fill="none" stroke="#ed5062" stroke-width="1.500" stroke-linecap="round"/></svg></td><td><svg class="ic2" width="18" height="18" viewBox="0 0 18 18" fill="none" stroke="#13c56b" stroke-width="1.350" stroke-linecap="round" stroke-linejoin="round"><path d="M16.430 7.980A7.400 7.300 0 1 1 11.500 2.140"/><path d="M4.500 8.500l3.200 2.700 8-7.600"/></svg></td><td><svg class="ic2" width="18" height="18" viewBox="0 0 18 18" fill="none" stroke="#13c56b" stroke-width="1.350" stroke-linecap="round" stroke-linejoin="round"><path d="M16.430 7.980A7.400 7.300 0 1 1 11.500 2.140"/><path d="M4.500 8.500l3.200 2.700 8-7.600"/></svg></td><td><span class="bg ga">Annuelle</span></td><td class="tf">35 000,00</td><td class="ac"><span class="btn g"><svg width="8" height="8" viewBox="0 0 8 8"><path d="M4 0v8M0 4h8" stroke="#fff" stroke-width="2"/></svg></span></td></tr><tr><td class="nm r"><span>Cantine</span></td><td><svg class="ix" width="15" height="14" viewBox="0 0 15 14"><path d="M1.600 1.200l11.800 11.200M13.400 1.200L1.600 12.400" fill="none" stroke="#ed5062" stroke-width="1.500" stroke-linecap="round"/></svg></td><td><svg class="ix" width="15" height="14" viewBox="0 0 15 14"><path d="M1.600 1.200l11.800 11.200M13.400 1.200L1.600 12.400" fill="none" stroke="#ed5062" stroke-width="1.500" stroke-linecap="round"/></svg></td><td><svg class="ic2" width="18" height="18" viewBox="0 0 18 18" fill="none" stroke="#13c56b" stroke-width="1.350" stroke-linecap="round" stroke-linejoin="round"><path d="M16.430 7.980A7.400 7.300 0 1 1 11.500 2.140"/><path d="M4.500 8.500l3.200 2.700 8-7.600"/></svg></td><td><span class="bg ye">Tranche</span></td><td class="tf">87 000,00</td><td class="ac"><span class="btn g"><svg width="8" height="8" viewBox="0 0 8 8"><path d="M4 0v8M0 4h8" stroke="#fff" stroke-width="2"/></svg></span></td></tr><tr><td class="nm g"><span>Scolarité et goûter</span></td><td><svg class="ix" width="15" height="14" viewBox="0 0 15 14"><path d="M1.600 1.200l11.800 11.200M13.400 1.200L1.600 12.400" fill="none" stroke="#ed5062" stroke-width="1.500" stroke-linecap="round"/></svg></td><td><svg class="ix" width="15" height="14" viewBox="0 0 15 14"><path d="M1.600 1.200l11.800 11.200M13.400 1.200L1.600 12.400" fill="none" stroke="#ed5062" stroke-width="1.500" stroke-linecap="round"/></svg></td><td><svg class="ic2" width="18" height="18" viewBox="0 0 18 18" fill="none" stroke="#13c56b" stroke-width="1.350" stroke-linecap="round" stroke-linejoin="round"><path d="M16.430 7.980A7.400 7.300 0 1 1 11.500 2.140"/><path d="M4.500 8.500l3.200 2.700 8-7.600"/></svg></td><td><span class="bg ye">Tranche</span></td><td class="tf">274 000,00</td><td class="ac"><span class="btn r"><svg width="8" height="8" viewBox="0 0 8 8"><path d="M0 4h8" stroke="#fff" stroke-width="2"/></svg></span><span class="btn b"><svg style="margin:-.5px 0 0 .4px" width="10" height="11" viewBox="0 0 11 12" fill="none" stroke="#fff" stroke-width="1.500"><path d="M.700 4.200L5.500.700l4.800 3.500v7.100H.700z"/><rect x="3.300" y="6.400" width="4.400" height="3.300" fill="#fff" stroke="none"/><circle cx="5.500" cy="4.600" r="1" fill="#fff" stroke="none"/></svg></span></td></tr></tbody></table>
<!--/T2--></div>
<div class="card rc" id="c1" style="left:1647px;top:143px;width:260.600px;height:108.500px"><div class="h">Reste à payer</div><svg class="coin" width="34" height="30" viewBox="0 0 34 30" fill="none" stroke="#3c4b8c" stroke-width="1.150" stroke-linecap="round"><path d="M14.600 7.900H7.650a2.750 2.750 0 0 1 .100-5.500L24.600 3.700c2 .200 3 1.800 2.800 4"/><path d="M13.200 9.050H5.700a2.700 2.700 0 0 0 0 5.400h5.600"/><path d="M11 15.050H8a2.650 2.650 0 0 0 0 5.300h3.300"/><path d="M11.700 21H5.700a2.750 2.750 0 0 0 0 5.500H15"/><circle cx="21.750" cy="17.360" r="10.850" fill="#fff"/><circle cx="21.750" cy="17.360" r="7.600" stroke="#22b39b" stroke-width="1.500"/></svg><div class="amt" style="left:88px;width:85px;padding-left:9.200px;background:linear-gradient(90deg,#ed5e5e,#0071bc)">0,00<small>FCFA</small></div></div>
<div class="card rc" id="c2" style="left:1647px;top:257px;width:260.600px;height:108.500px"><div class="h">Total payé</div><svg class="coin" width="34" height="30" viewBox="0 0 34 30" fill="none" stroke="#3c4b8c" stroke-width="1.150" stroke-linecap="round"><path d="M14.600 7.900H7.650a2.750 2.750 0 0 1 .100-5.500L24.600 3.700c2 .200 3 1.800 2.800 4"/><path d="M13.200 9.050H5.700a2.700 2.700 0 0 0 0 5.400h5.600"/><path d="M11 15.050H8a2.650 2.650 0 0 0 0 5.300h3.300"/><path d="M11.700 21H5.700a2.750 2.750 0 0 0 0 5.500H15"/><circle cx="21.750" cy="17.360" r="10.850" fill="#fff"/><circle cx="21.750" cy="17.360" r="7.600" stroke="#22b39b" stroke-width="1.500"/></svg><div class="amt" style="left:63.300px;width:134.500px;padding-left:8.900px;background:linear-gradient(90deg,#13c56b,#e8bc52)">548 000,00<small>FCFA</small></div></div>
</body>
</html>
